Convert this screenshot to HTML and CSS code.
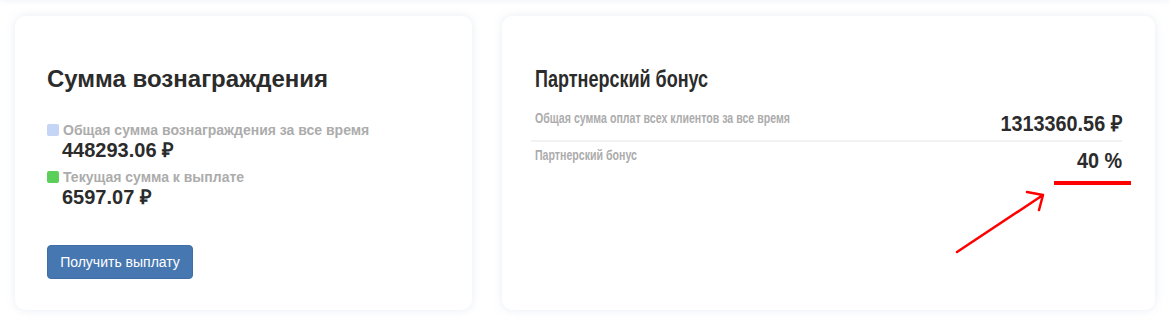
FILE: index.html
```html
<!DOCTYPE html>
<html lang="ru">
<head>
<meta charset="utf-8">
<link rel="stylesheet" href="styles.css">
</head>
<body>
<div class="top-shadow"></div>
<div class="row">
  <section class="card card-left">
    <h2 class="title">Сумма вознаграждения</h2>
    <div class="legend">
      <div class="legend-item">
        <div class="legend-label"><span class="swatch swatch-blue"></span>Общая сумма вознаграждения за все время</div>
        <div class="legend-value">448293.06 ₽</div>
      </div>
      <div class="legend-item">
        <div class="legend-label"><span class="swatch swatch-green"></span>Текущая сумма к выплате</div>
        <div class="legend-value">6597.07 ₽</div>
      </div>
    </div>
    <button class="btn">Получить выплату</button>
  </section>
  <section class="card card-right">
    <h2 class="title"><span class="narrow narrow-title">Партнерский бонус</span></h2>
    <div class="stats">
      <div class="stat stat-first">
        <span class="stat-label narrow narrow-label">Общая сумма оплат всех клиентов за все время</span>
        <span class="stat-value narrow narrow-value">1313360.56 ₽</span>
      </div>
      <div class="stat">
        <span class="stat-label narrow narrow-label">Партнерский бонус</span>
        <span class="stat-value stat-percent narrow narrow-value">40 %</span>
      </div>
    </div>
    <svg class="annotation" width="653" height="294" viewBox="0 0 653 294">
      <line x1="552" y1="167" x2="629" y2="167" stroke="#ff0000" stroke-width="4"/>
      <path d="M455 236 L541 179 M525 176 L541 179 L537 194" fill="none" stroke="#ff0000" stroke-width="2.5" stroke-linecap="round" stroke-linejoin="round"/>
    </svg>
  </section>
</div>
</body>
</html>
```
FILE: styles.css
```css
html, body {
  margin: 0;
  padding: 0;
  background: #ffffff;
}
body {
  font-family: "Liberation Sans", Arial, sans-serif;
  color: #333;
  position: relative;
  height: 325px;
  overflow: hidden;
}
.top-shadow {
  position: absolute;
  left: 0;
  right: 0;
  top: -10px;
  height: 10px;
  box-shadow: 0 0 6px rgba(200, 208, 225, 0.35);
}
.row {
  display: flex;
  gap: 30px;
  padding: 16px 0 0 15px;
}
.card {
  background: #fff;
  border-radius: 10px;
  box-shadow: 0 0 8px rgba(190, 200, 220, 0.35);
  height: 294px;
  box-sizing: border-box;
  position: relative;
}
.card-left {
  width: 457px;
  padding: 49px 32px 0 32px;
}
.card-right {
  width: 653px;
  padding: 49px 33px 0 33px;
}
.title {
  margin: 0;
  font-size: 24px;
  font-weight: bold;
  line-height: 28px;
  color: #2b2b2b;
  white-space: nowrap;
}
.narrow {
  display: inline-block;
  white-space: nowrap;
}
.narrow-title {
  transform: scaleX(0.75);
  transform-origin: left center;
}
.narrow-label {
  transform: scaleX(0.757);
  transform-origin: left center;
}
.narrow-value {
  transform: scaleX(0.9);
  transform-origin: right center;
}
.legend {
  margin-top: 29px;
  display: flex;
  flex-direction: column;
  gap: 7px;
}
.legend-label {
  display: flex;
  align-items: center;
  gap: 4px;
  font-size: 14px;
  font-weight: bold;
  color: #acacac;
  line-height: 16px;
}
.swatch {
  width: 12px;
  height: 12px;
  border-radius: 2px;
  display: inline-block;
}
.swatch-blue { background: #c4d5f6; }
.swatch-green { background: #5ccf5a; }
.legend-value {
  padding-left: 15px;
  font-size: 20px;
  font-weight: bold;
  color: #2b2b2b;
  line-height: 24px;
}
.btn {
  margin-top: 36px;
  display: block;
  height: 34px;
  width: 146px;
  border: 1px solid #3f6da5;
  border-radius: 4px;
  background: #4677b1;
  color: #fff;
  font-family: "Liberation Sans", Arial, sans-serif;
  font-size: 14px;
  padding: 0;
}
.stats {
  margin-top: 17px;
}
.stat {
  display: flex;
  justify-content: space-between;
  align-items: flex-start;
}
.stat-first {
  border-bottom: 2px solid #f1f2f4;
  padding-bottom: 4px;
  margin-left: -4px;
  padding-left: 4px;
}
.stat + .stat {
  padding-top: 5px;
}
.stat-label {
  font-size: 14px;
  font-weight: bold;
  color: #acacac;
  line-height: 16px;
}
.stat-value {
  font-size: 22px;
  font-weight: bold;
  color: #2b2b2b;
  line-height: 24px;
  padding-top: 2px;
}
.stat-percent {
  padding-top: 2px;
}
.annotation {
  position: absolute;
  left: 0;
  top: 0;
  pointer-events: none;
}
```
